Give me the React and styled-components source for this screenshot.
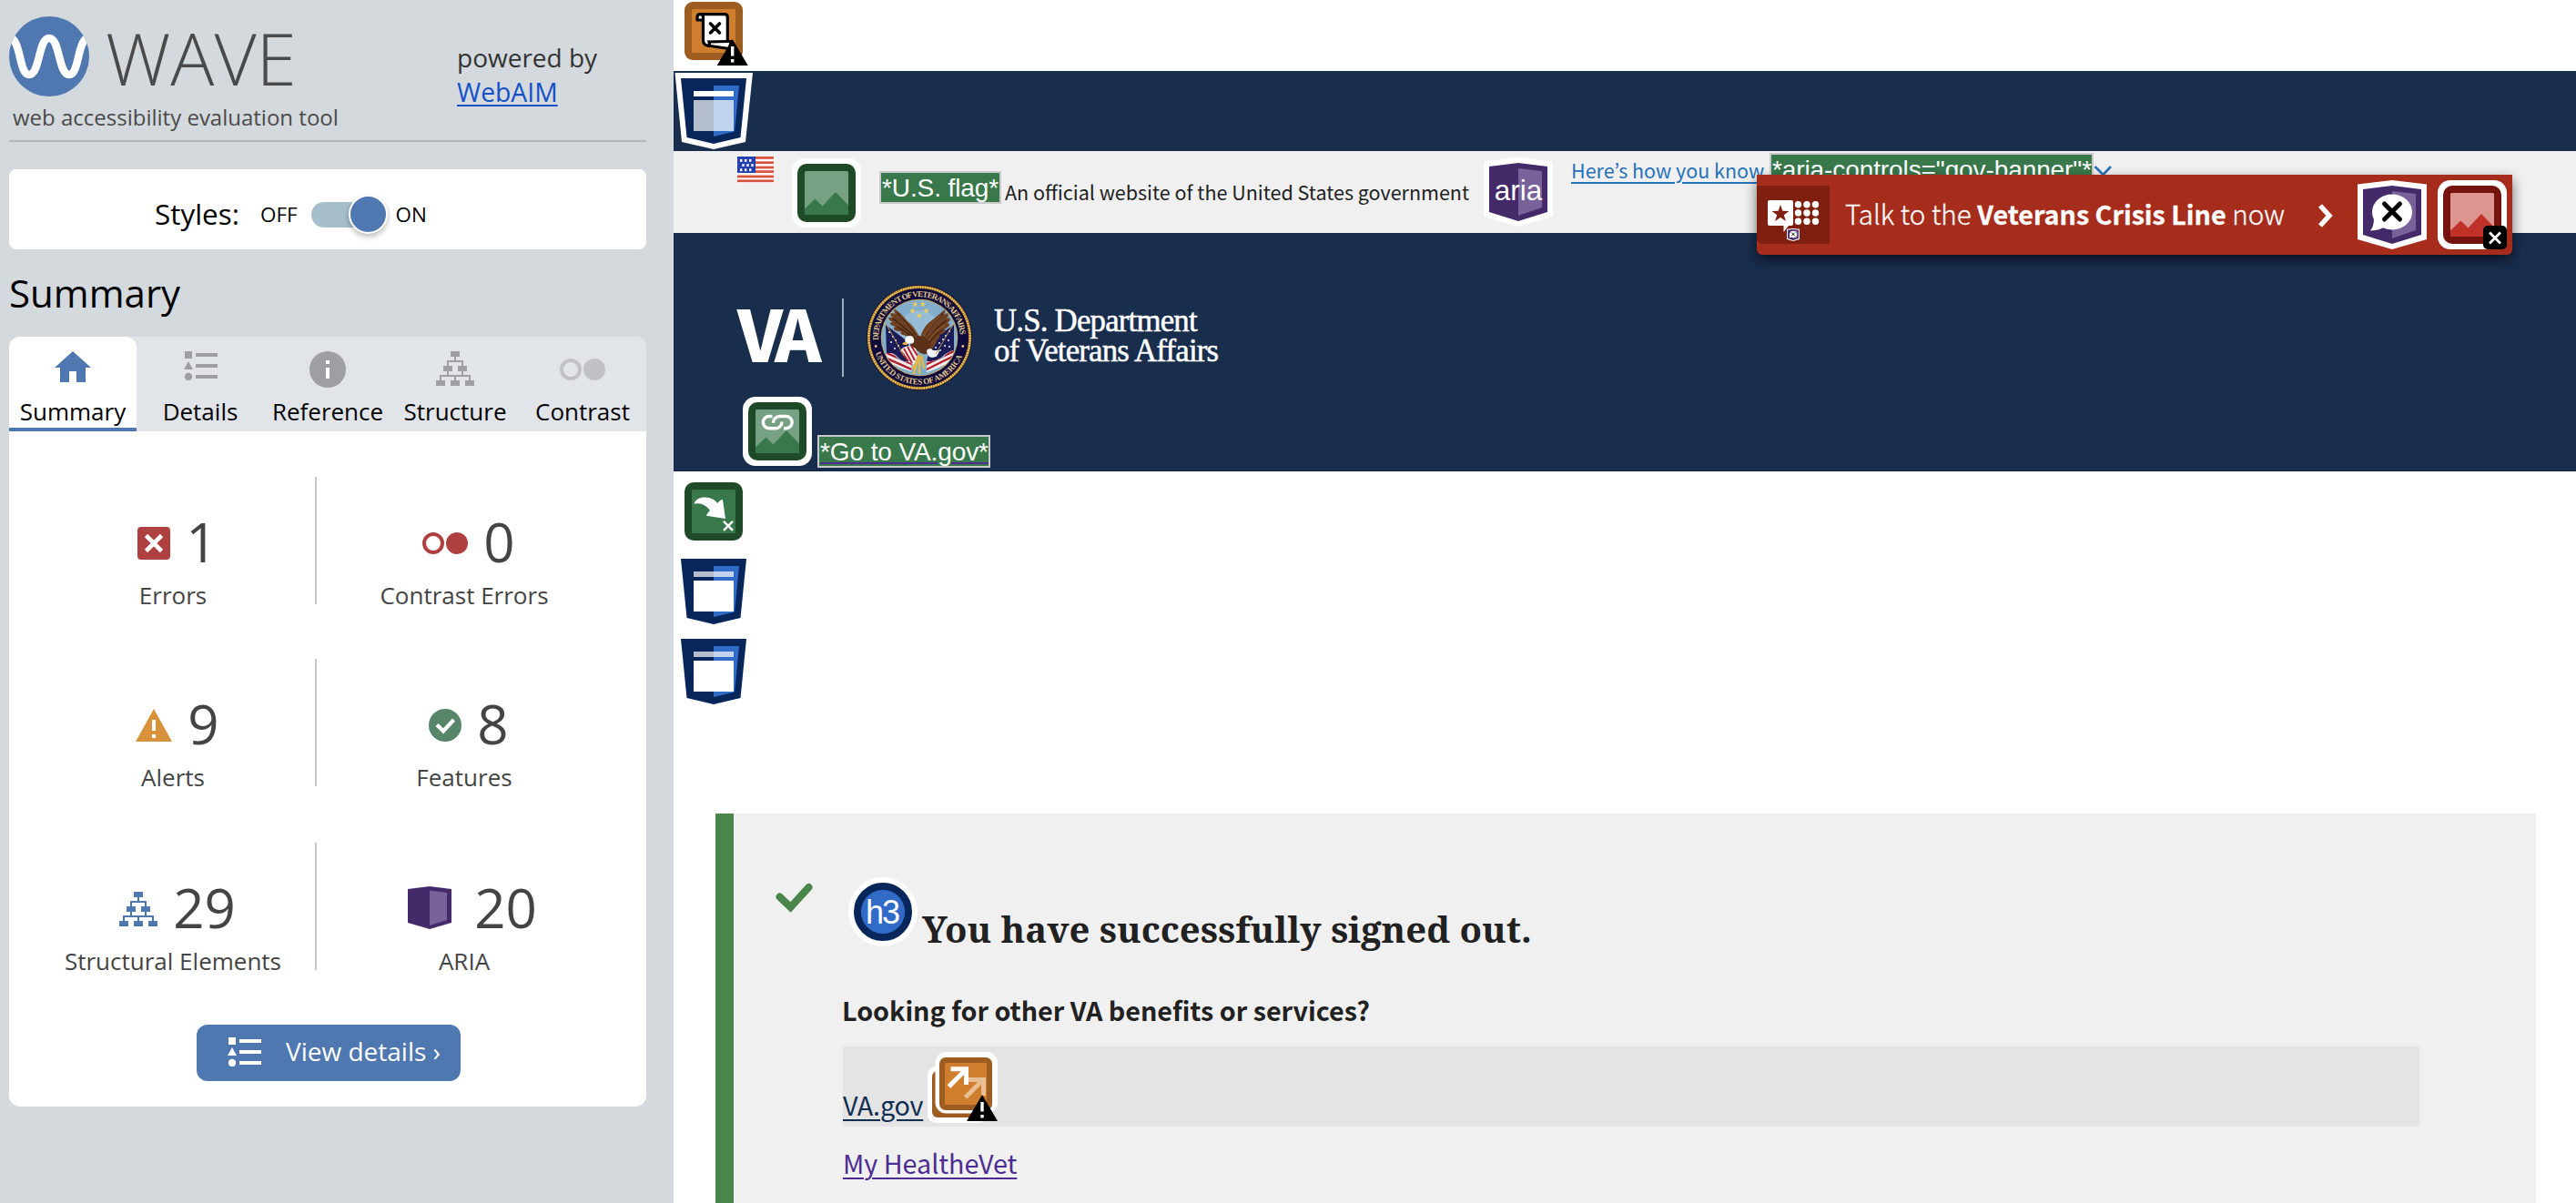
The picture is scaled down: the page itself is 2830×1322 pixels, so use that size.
import React from "react";
import styled, { createGlobalStyle, css } from "styled-components";

const openSans = `"Open Sans", "Liberation Sans", sans-serif`;
const sourceSans = `"Noto Sans CJK KR", "Noto Sans", sans-serif`;
const helvetica = `"Liberation Sans", Arial, sans-serif`;

const GlobalStyle = createGlobalStyle`
  * { box-sizing: border-box; }
  html, body { margin: 0; padding: 0; background: #fff; }
  svg { display: block; flex: none; }
`;

const Screen = styled.div`
  display: flex;
  width: 2830px;
  height: 1322px;
  overflow: hidden;
`;

/* ---------- Sidebar ---------- */

const Sidebar = styled.aside`
  flex: none;
  width: 740px;
  height: 100%;
  padding: 18px 30px 0 10px;
  background: #d4d9dd;
  font-family: ${openSans};
`;

const SidebarHeader = styled.header`
  display: flex;
  height: 138px;
  border-bottom: 2px solid #b2b8bc;
`;

const Brand = styled.div`
  width: 492px;
`;

const BrandRow = styled.div`
  display: flex;
  gap: 18px;
  height: 88px;
`;

const BrandName = styled.div`
  padding-top: 1px;
  font-size: 80px;
  font-weight: 300;
  line-height: 88px;
  color: #4a4a4a;
`;

const Tagline = styled.div`
  margin: 7px 0 0 4px;
  font-size: 24px;
  line-height: 32px;
  color: #4a4a4a;
`;

const PoweredBy = styled.div`
  display: flex;
  flex-direction: column;
  align-items: flex-start;
  padding-top: 26px;
  font-size: 28px;
  line-height: 38px;
  color: #333;
`;

const WebAimLink = styled.a`
  color: #1351c9;
  font-size: 28.3px;
  text-decoration: underline;
  text-decoration-thickness: 2px;
  text-underline-offset: 3px;
`;

const StylesCard = styled.section`
  display: flex;
  align-items: center;
  height: 88px;
  margin-top: 30px;
  padding: 11px 0 0 160px;
  background: #fff;
  border-radius: 8px;
`;

const StylesLabel = styled.span`
  width: 116px;
  padding-bottom: 3px;
  font-size: 31.4px;
`;

const ToggleText = styled.span`
  font-size: 22.4px;
`;

const ToggleTrack = styled.span`
  display: flex;
  align-items: center;
  justify-content: flex-end;
  width: 82px;
  height: 28px;
  margin: 0 11px 0 15px;
  background: linear-gradient(to right, #a6bfca 70px, transparent 70px);
  border-radius: 14px;
`;

const ToggleThumb = styled.span`
  flex: none;
  width: 43px;
  height: 43px;
  margin-right: -2px;
  background: #5078b0;
  border: 2px solid #fff;
  border-radius: 50%;
  box-shadow: 0 3px 6px rgba(0, 0, 0, 0.28);
`;

const SidebarTitle = styled.h1`
  margin: 19px 0 19px;
  font-size: 42px;
  font-weight: 400;
  line-height: 58px;
  color: #000;
`;

const Panel = styled.section`
  height: 846px;
  background: #fff;
  border-radius: 12px;
  overflow: hidden;
`;

const Tabs = styled.nav`
  display: grid;
  grid-template-columns: repeat(5, 140px);
  height: 104px;
  background: #e1e4e9;
`;

const Tab = styled.div`
  display: flex;
  flex-direction: column;
  align-items: center;
  padding-top: 16px;
  font-size: 26px;
  line-height: 36px;
  color: #000;
  ${(p) =>
    p.$active &&
    css`
      background: linear-gradient(#5078b0, #5078b0) bottom / 100% 4px no-repeat, #fff;
      border-radius: 12px 12px 0 0;
    `}
`;

const TabIcon = styled.div`
  display: flex;
  justify-content: center;
  height: 40px;
  margin-bottom: 8px;
  padding-top: ${(p) => p.$drop || 0}px;
`;

const Stats = styled.div`
  display: grid;
  grid-template-columns: 314px 324px;
  grid-template-rows: 140px 140px 142px;
  row-gap: 60px;
  align-items: end;
  padding: 50px 0 0 24px;
`;

const Stat = styled.div`
  display: flex;
  flex-direction: column;
  align-items: center;
  height: 140px;
  padding-top: 29px;
  ${(p) => p.$divided && css`border-right: 2px solid #c8c8c8;`}
`;

const StatValue = styled.div`
  display: flex;
  align-items: center;
  gap: 17px;
  height: 84px;
  padding-left: 10px;
  font-size: 60px;
  line-height: 84px;
  color: #444;
`;

const StatIcon = styled.span`
  padding-top: ${(p) => (p.$wide ? 0 : 3)}px;
  margin: 0 ${(p) => (p.$wide ? 8 : 0)}px;
`;

const StatLabel = styled.div`
  font-size: 26px;
  line-height: 34px;
  white-space: nowrap;
  color: #444;
`;

const DetailsButton = styled.button`
  display: flex;
  align-items: center;
  gap: 27px;
  width: 290px;
  height: 62px;
  margin: 60px 0 0 206px;
  padding: 0 0 2px 34px;
  border: 0;
  border-radius: 12px;
  background: #5078b0;
  color: #fff;
  font-family: inherit;
  font-size: 28px;
  line-height: 38px;
`;

const DetailsText = styled.span`
  padding-bottom: 2px;
  white-space: nowrap;
`;

/* ---------- Evaluated page ---------- */

const Page = styled.main`
  position: relative;
  flex: 1;
  height: 100%;
  background: #fff;
  font-family: ${sourceSans};
  color: #212121;
`;

const AlertStrip = styled.div`
  height: 78px;
  padding: 2px 0 0 12px;
`;

const NavStrip = styled.div`
  height: 88px;
  padding: 2px 0 0 1px;
  background: #192d4d;
`;

const GovBanner = styled.div`
  display: flex;
  align-items: flex-start;
  height: 90px;
  padding-left: 70px;
  background: #f0f0f0;
`;

const FlagBox = styled.span`
  margin-top: 5px;
`;

const ImageMarker = styled.span`
  margin: 8px 20px 0;
`;

const AltText = styled.span`
  display: inline-block;
  width: ${(p) => p.$width}px;
  height: 36px;
  margin: ${(p) => p.$margin || "0"};
  padding-left: 1px;
  border: 2px solid #c9cbca;
  background: #38784b;
  color: #fff;
  font-family: ${helvetica};
  font-size: 28px;
  line-height: 33px;
  letter-spacing: -0.1px;
  white-space: nowrap;
  text-decoration: ${(p) => (p.$linked ? "underline 2px #4c2c92" : "none")};
  text-underline-offset: 2px;
`;

const OfficialText = styled.span`
  width: 526px;
  margin: 25px 0 0 4px;
  font-size: 21.5px;
  line-height: 40px;
  white-space: nowrap;
`;

const AriaMarker = styled.span`
  margin-top: 7px;
`;

const HowLink = styled.a`
  width: 218px;
  margin: 6px 0 0 20px;
  font-size: 21.5px;
  line-height: 30px;
  white-space: nowrap;
  color: #2672b9;
  text-decoration: underline;
  text-decoration-thickness: 2px;
  text-underline-offset: 4px;
`;

const ChevronBox = styled.span`
  margin-top: 15px;
`;

const CrisisLine = styled.aside`
  position: absolute;
  left: 1190px;
  top: 192px;
  display: flex;
  align-items: flex-start;
  width: 830px;
  height: 88px;
  background: #a62c1b;
  border-radius: 0 0 6px 6px;
  box-shadow: 0 6px 14px rgba(0, 0, 0, 0.55);
`;

const CrisisBadge = styled.div`
  width: 80px;
  height: 64px;
  margin-top: 12px;
  background: #7f1f10;
  border-radius: 0 0 0 6px;
`;

const CrisisText = styled.div`
  width: 519px;
  margin: 23px 0 0 17px;
  font-size: 29.6px;
  font-weight: 300;
  line-height: 40px;
  white-space: nowrap;
  color: #fff;
  -webkit-text-stroke: 0.3px #fff;
`;

const CrisisName = styled.b`
  font-size: 28.7px;
  font-weight: 700;
`;

const CrisisChevron = styled.span`
  width: 44px;
  margin-top: 31px;
`;

const CrisisMarkers = styled.div`
  display: flex;
  gap: 12px;
  margin-top: 6px;
`;

const SiteHeader = styled.header`
  height: 262px;
  padding: 56px 0 0 70px;
  background: #192d4d;
  border-bottom: 1px solid #112445;
`;

const LogoRow = styled.div`
  display: flex;
  align-items: center;
  height: 118px;
`;

const LogoLetters = styled.span`
  width: 115px;
  margin-top: -14px;
  font-size: 78px;
  font-weight: 900;
  line-height: 100px;
  letter-spacing: -7.5px;
  color: #fff;
`;

const LogoRule = styled.span`
  width: 2px;
  height: 86px;
  margin-right: 25px;
  background: #a1abb9;
`;

const DepartmentName = styled.div`
  margin: -3px 0 0 24px;
  font-family: "Liberation Serif", "Times New Roman", serif;
  font-size: 34.8px;
  line-height: 32.5px;
  letter-spacing: -0.8px;
  white-space: nowrap;
  color: #fff;
  -webkit-text-stroke: 0.5px #fff;
`;

const HomeLinkRow = styled.div`
  display: flex;
  align-items: flex-start;
  gap: 6px;
  padding: 6px 0 0 6px;
`;

const MarkerColumn = styled.div`
  display: flex;
  flex-direction: column;
  height: 376px;
  padding: 12px 0 0 1px;
`;

const SkipMarker = styled.span`
  margin: 0 0 14px 11px;
`;

const NavMarker = styled.span`
  height: 88px;
`;

const SignedOutAlert = styled.section`
  display: flex;
  width: 2000px;
  height: 428px;
  margin-left: 46px;
  background: #f0f0f0;
  border-left: 20px solid #4a8649;
`;

const CheckColumn = styled.div`
  width: 120px;
  padding: 76px 0 0 46px;
`;

const AlertBody = styled.div`
  width: 1732px;
  padding-top: 70px;
`;

const HeadingRow = styled.div`
  display: flex;
  align-items: flex-start;
  height: 110px;
  padding-left: 6px;
`;

const HeadingBadge = styled.span`
  display: flex;
  align-items: center;
  justify-content: center;
  width: 76px;
  height: 76px;
  margin-right: 5px;
  padding: 2px 2px 0 0;
  border: 6px solid #fff;
  border-radius: 50%;
  background: radial-gradient(circle, #306bc8 23.5px, #08265a 24.5px);
  color: #fff;
  font-family: ${helvetica};
  font-size: 36px;
  line-height: 40px;
  letter-spacing: -2px;
`;

const AlertHeading = styled.h3`
  margin: 31px 0 0;
  font-family: "Noto Serif", "DejaVu Serif", serif;
  font-size: 40px;
  font-weight: 700;
  line-height: 52px;
`;

const Question = styled.p`
  margin: 0 0 0 -1px;
  padding-top: 16px;
  height: 76px;
  font-size: 28.7px;
  font-weight: 700;
  line-height: 40px;
`;

const HighlightedRow = styled.div`
  display: flex;
  align-items: flex-start;
  height: 88px;
  background: #e4e4e4;
`;

const ServiceLink = styled.a`
  font-size: 28.7px;
  line-height: 40px;
  letter-spacing: ${(p) => p.$tracking || 0}px;
  color: ${(p) => p.$color};
  text-decoration: underline;
  text-decoration-thickness: 2px;
  text-underline-offset: 4px;
`;

const PrimaryLinkBox = styled.span`
  width: 93px;
  padding-top: 44px;
`;

const StackMarker = styled.span`
  padding-top: 6px;
`;

const SecondRow = styled.div`
  padding-top: 20px;
`;

/* ---------- Drawings ---------- */

const WaveLogo = () => (
  <svg width="88" height="88" viewBox="0 0 88 88">
    <defs>
      <clipPath id="wave-clip"><circle cx="44" cy="44" r="44" /></clipPath>
    </defs>
    <circle cx="44" cy="44" r="44" fill="#5078b0" />
    <path clipPath="url(#wave-clip)" d="M-2 22C14 22 10 64 22 64S32 24 44 24 54 64 66 64 74 22 90 22" fill="none" stroke="#fff" strokeWidth="8.5" />
  </svg>
);

const HomeIcon = () => (
  <svg width="40" height="34" viewBox="0 0 40 34">
    <path d="M20 0 40 18H34V34H24V22H16V34H6V18H0Z" fill="#5078b0" />
  </svg>
);

const ListIcon = ({ color }) => (
  <svg width="37" height="32" viewBox="0 0 37 32" fill={color}>
    <path d="M1 0H9V8H1ZM13 2H37V6H13ZM13 14H37V18H13ZM13 26H37V30H13ZM5 11 10 20H0Z" />
    <circle cx="5" cy="28" r="4.2" />
  </svg>
);

const InfoIcon = () => (
  <svg width="40" height="40" viewBox="0 0 40 40">
    <circle cx="20" cy="20" r="20" fill="#9d9fa2" />
    <path d="M18 10H22V14H18ZM18 18H22V30H18Z" fill="#fff" />
  </svg>
);

const TreeIcon = ({ color }) => (
  <svg width="42" height="38" viewBox="0 0 42 38">
    <path d="M16 0H26V6H16ZM8 16H18V22H8ZM24 16H34V22H24ZM0 32H10V38H0ZM16 32H26V38H16ZM32 32H42V38H32Z" fill={color} />
    <path d="M21 6V11M13 16V11H29V16M13 22V27M29 22V27M5 32V27H37V32M21 27V32" fill="none" stroke={color} strokeWidth="2" />
  </svg>
);

const ContrastIcon = ({ color }) => (
  <svg width="50" height="24" viewBox="0 0 50 24">
    <circle cx="12" cy="12" r="10" fill="none" stroke={color} strokeWidth="4" />
    <circle cx="38" cy="12" r="12" fill={color} />
  </svg>
);

const ErrorIcon = () => (
  <svg width="36" height="36" viewBox="0 0 36 36">
    <rect width="36" height="36" rx="4" fill="#ae413f" />
    <path d="M9.5 9.5 26.5 26.5M26.5 9.5 9.5 26.5" stroke="#fff" strokeWidth="4.6" />
  </svg>
);

const WarningIcon = () => (
  <svg width="40" height="36" viewBox="0 0 40 36">
    <path d="M20 0 40 36H0Z" fill="#d8923b" />
    <path d="M18 12H22V24H18ZM18 28H22V32H18Z" fill="#fff" />
  </svg>
);

const FeatureIcon = () => (
  <svg width="36" height="36" viewBox="0 0 36 36">
    <circle cx="18" cy="18" r="18" fill="#568569" />
    <path d="M9 17.5 16 24.5 27.5 12" fill="none" stroke="#fff" strokeWidth="4.2" />
  </svg>
);

const AriaIcon = () => (
  <svg width="48" height="47" viewBox="0 0 48 47">
    <path d="M24 0 48 3V40L24 47 0 40V3Z" fill="#442a69" />
    <path d="M24 4.5 43 7V37L24 43Z" fill="#796299" />
  </svg>
);

const AriaShield = ({ children }) => (
  <svg width="76" height="76" viewBox="0 0 76 76">
    <path d="M0 4.5 38 0 76 4.5V65L38 76 0 65Z" fill="#fff" />
    <path d="M6 10 38 6 70 10V60L38 70 6 60Z" fill="#442a69" />
    <path d="M38 12 64 15V55L38 64Z" fill="#796299" />
    {children}
  </svg>
);

const AriaTextIcon = () => (
  <AriaShield>
    <text x="38" y="46.5" textAnchor="middle" fill="#fff" fontFamily="Liberation Sans, Arial, sans-serif" fontSize="31.5">aria</text>
  </AriaShield>
);

const AriaHiddenShape = () => (
  <>
    <ellipse cx="38" cy="35" rx="22" ry="19.5" fill="#fff" />
    <path d="M18 42Q18 51 14 55.5 26 55 31 50Z" fill="#fff" />
    <path d="M29.5 26 46.5 43M46.5 26 29.5 43" stroke="#000" strokeWidth="5" strokeLinecap="round" />
  </>
);

const AlertTriangle = ({ x, y }) => (
  <g transform={`translate(${x} ${y})`}>
    <path d="M17 0 34 29H0Z" fill="#000" />
    <path d="M15.3 8H18.7V18.5H15.3ZM15.3 22H18.7V25.5H15.3Z" fill="#fff" />
  </g>
);

const ScriptIcon = () => (
  <svg width="70" height="72" viewBox="0 0 70 72">
    <rect width="64" height="64" rx="9" fill="#9d5d20" />
    <rect x="8" y="8" width="48" height="48" rx="1.5" fill="#cf7e2d" />
    <path d="M17 13.7H44Q47.3 13.7 47.3 17V43.5H51.5L49 51.5 25 48Q20.5 47 20.5 42V20H14V17Q14 13.7 17 13.7Z" fill="#fff" stroke="#000" strokeWidth="3.2" strokeLinejoin="round" />
    <path d="M20.5 20V17Q20.5 14 17.5 14M25 48Q28.5 48 27 44L47 43.5" fill="none" stroke="#000" strokeWidth="3.2" />
    <path d="M28.5 24 38.5 34M38.5 24 28.5 34" stroke="#000" strokeWidth="3.6" strokeLinecap="round" />
    <AlertTriangle x={35.7} y={41} />
  </svg>
);

const NavIcon = ({ outlined, header }) => (
  <svg width="88" height="84" viewBox="0 0 88 84">
    {outlined && <path d="M.5 0H86L78 76 43 84 8 76Z" fill="#fff" />}
    <path d="M7 6H79L72.5 71 43 78 13.5 71Z" fill="#08265a" />
    <path d="M43 14H71L66 64.5 43 70Z" fill="#306bc8" />
    <path d="M21 20H65V26H21Z" fill="#fff" opacity={header ? 1 : 0.7} />
    <path d="M21 30H65V64H21Z" fill="#fff" opacity={header ? 0.7 : 1} />
  </svg>
);

const PictureIcon = ({ dark = "#1f4a28", base = "#38784b", light = "#76a183", children }) => (
  <svg width="76" height="76" viewBox="0 0 76 76">
    <rect width="76" height="76" rx="14" fill="#fff" />
    <rect x="6" y="6" width="64" height="64" rx="10" fill={dark} />
    <rect x="14" y="14" width="48" height="48" rx="1.5" fill={light} />
    <path d="M14 55.5 25.5 44.5 33.5 52.5 48 37 62 51.5V60.5Q62 62 60.5 62H15.5Q14 62 14 60.5Z" fill={base} />
    {children}
  </svg>
);

const LinkShape = () => (
  <g fill="none" stroke="#fff" strokeWidth="3.4">
    <path d="M32.5 21.5H29A6.7 6.6 0 0 0 29 34.7H36A7 7 0 0 0 43 27.5" />
    <path d="M45 34.7H47.5A6.7 6.6 0 0 0 47.5 21.5H40.5A7 7 0 0 0 33.5 28.7" />
  </g>
);

const NullBadge = () => (
  <g>
    <rect x="50" y="50" width="26" height="26" rx="5" fill="#000" />
    <path d="M57 57.5 69 69.5M69 57.5 57 69.5" stroke="#fff" strokeWidth="2.8" />
  </g>
);

const SkipIcon = () => (
  <svg width="64" height="64" viewBox="0 0 64 64">
    <rect width="64" height="64" rx="10" fill="#1f4a28" />
    <rect x="8" y="8" width="48" height="48" rx="1.5" fill="#38784b" />
    <path d="M10.5 23.5Q12 18 20 16.5 31 15.5 36.3 23 39.5 18.7 42 18.9L45 40 24 36.8Q23.5 36 28 31 21 21.5 11.5 23.6Z" fill="#fff" />
    <path d="M43 42.8 53 52.8M53 42.8 43 52.8" stroke="#fff" strokeWidth="2.4" />
  </svg>
);

const FlagIcon = () => (
  <svg width="40" height="30" viewBox="0 0 40 30">
    <rect width="40" height="30" fill="#fff" />
    {[1, 6.3, 11.6, 16.2, 21.6, 26.4].map((y) => (
      <rect key={y} y={y} width="40" height="2.8" fill="#d8543f" />
    ))}
    <rect y="1" width="20" height="18" fill="#2440b3" />
    {[3, 8, 13].map((x) => <rect key={x} x={x} y="4" width="2.4" height="2.8" fill="#fff" />)}
    {[5.3, 10.3, 15.3].map((x) => <rect key={x} x={x} y="9.2" width="2.4" height="2.8" fill="#fff" />)}
    {[3, 8, 13].map((x) => <rect key={x} x={x} y="14.3" width="2.4" height="2.8" fill="#fff" />)}
  </svg>
);

const starPath = (cx, cy, r) => {
  const pts = [];
  for (let i = 0; i < 10; i += 1) {
    const a = (Math.PI / 5) * i - Math.PI / 2;
    const d = i % 2 ? r * 0.4 : r;
    pts.push(`${(cx + d * Math.cos(a)).toFixed(2)} ${(cy + d * Math.sin(a)).toFixed(2)}`);
  }
  return `M${pts.join("L")}Z`;
};

const CrisisIcon = () => (
  <svg width="80" height="64" viewBox="0 0 80 64">
    <path d="M14 16H38Q40 16 40 18V42Q40 44 38 44H35L29.5 51V44H14Q12 44 12 42V18Q12 16 14 16Z" fill="#fff" />
    <path d={starPath(26, 31, 10)} fill="#7f1f10" />
    {[45.5, 55, 64.5].map((x) =>
      [20.7, 30, 39.3].map((y) => <circle key={`${x}-${y}`} cx={x} cy={y} r="3.7" fill="#fff" />)
    )}
    <g transform="translate(33 47) scale(.184)">
      <AriaShield><AriaHiddenShape /></AriaShield>
    </g>
  </svg>
);

const StackIcon = () => (
  <svg width="78" height="78" viewBox="0 0 78 78">
    <rect y="16" width="66" height="62" rx="9" fill="#fff" />
    <rect x="5" y="21" width="58" height="51" rx="6" fill="#9d5d20" />
    <rect x="8.5" width="68.5" height="67.5" rx="12" fill="#fff" />
    <rect x="13" y="6" width="58" height="58" rx="7" fill="#9d5d20" />
    <rect x="19" y="12" width="46" height="46" rx="1.5" fill="#cf7e2d" />
    <g fill="none" strokeWidth="5">
      <path d="M41.5 50 60.5 31M44 30.5H61.5V48" stroke="#e8bf95" />
      <path d="M23.5 38 42 19.5M25.5 18.7H42.5V36" stroke="#fff" />
    </g>
    <AlertTriangle x={43} y={47} />
  </svg>
);

const Seal = () => (
  <svg width="116" height="116" viewBox="0 0 116 116">
    <defs>
      <path id="seal-top" d="M13.1 61A45 45 0 1 1 102.9 61" />
      <path id="seal-bottom" d="M9.5 75A51.4 51.4 0 0 0 106.5 75" />
      <clipPath id="seal-clip"><circle cx="58" cy="58" r="41.5" /></clipPath>
      <clipPath id="flag-l"><path d="M21 76Q29 73 33 80 40 86 50 85L49 95Q38 92 33 89 26 88 21 76Z" /></clipPath>
      <clipPath id="flag-r"><path d="M96 72Q89 73 85 79 76 85 66 84L66 96Q78 92 83 89 92 88 96 72Z" /></clipPath>
    </defs>
    <circle cx="58" cy="58" r="58" fill="#0f0b3c" />
    <circle cx="58" cy="58" r="55.6" fill="none" stroke="#8a5f1c" strokeWidth="3.2" />
    <circle cx="58" cy="58" r="55.6" fill="none" stroke="#f0c65a" strokeWidth="2.4" strokeDasharray="1.9 .8" />
    <circle cx="58" cy="58" r="42.3" fill="#cfa94d" />
    <circle cx="58" cy="58" r="41.5" fill="#82aecb" />
    <g fill="#e0c88a" fontFamily="Liberation Serif, Times New Roman, serif" fontSize="9" fontWeight="700">
      <text textLength="141" lengthAdjust="spacing"><textPath href="#seal-top">DEPARTMENT OF VETERANS AFFAIRS</textPath></text>
      <text textLength="123" lengthAdjust="spacing"><textPath href="#seal-bottom">UNITED STATES OF AMERICA</textPath></text>
      <circle cx="10.2" cy="67.5" r="1.4" />
      <circle cx="105.8" cy="67.5" r="1.4" />
    </g>
    <g clipPath="url(#seal-clip)">
      <circle cx="58" cy="50" r="22" fill="#a9cbe0" opacity=".5" />
      <path d="M21 44 45 62 51 84Q41 86 35 80 29 73 22 76Z" fill="#1b1b57" />
      <path d="M96 44 72 60 66 84Q76 85 83 79 88 73 96 74Z" fill="#1b1b57" />
      <g fill="#dfe4f2">
        {[[25, 52], [29, 57], [27, 63], [32, 61], [35, 67], [31, 70], [38, 73], [91, 51], [87, 56], [90, 61], [84, 60], [86, 67], [80, 64], [81, 72], [76, 69], [91, 68], [76, 78]].map(([x, y]) => (
          <circle key={`${x}-${y}`} cx={x} cy={y} r="1.1" />
        ))}
      </g>
      <g clipPath="url(#flag-l)">
        <rect x="18" y="70" width="36" height="28" fill="#f3eeee" />
        <path d="M18 79 52 94M20 74 54 89M18 85 46 98M28 74 54 84" stroke="#b3202e" strokeWidth="2.4" />
      </g>
      <g clipPath="url(#flag-r)">
        <rect x="62" y="68" width="38" height="30" fill="#f3eeee" />
        <path d="M98 77 64 94M98 72 62 89M98 83 70 98M90 71 62 84" stroke="#b3202e" strokeWidth="2.4" />
      </g>
      <path d="M58 57Q52 45 45 40 38 31 30 26 30 30 32 32 27 30 26 32 27 35 29 36 24 35 24 37 26 40 29 41 25 41 26 43 29 46 32 46 29 47 30 49 34 52 38 51 36 54 40 55 44 57 47 56 51 62 60 64Z" fill="#6f4021" />
      <path d="M58 62Q61 48 68 42 77 35 86 27 87 30 85 33 89 30 90 32 90 35 88 37 92 35 92 38 91 41 88 42 92 42 91 45 88 48 85 49 88 50 86 52 83 55 80 55 82 57 78 60 75 68 68 76L62 74Z" fill="#6f4021" />
      <path d="M34 31Q46 42 54 55M29 37Q42 47 52 56M33 46Q42 50 50 57M84 32Q72 42 65 55M88 39Q76 47 68 60M85 49Q76 53 69 64" fill="none" stroke="#3f2110" strokeWidth="1.3" />
      <path d="M37 33Q47 42 55 53M82 33Q71 43 63 56M86 44Q75 50 68 61" fill="none" stroke="#a06a3a" strokeWidth=".9" />
      <path d="M48 60Q56 53 65 58 73 66 70 74 62 79 57 73 50 70 48 66Z" fill="#5b3219" />
      <path d="M42 61Q43 56 49 56 53 58 52 63 50 66 47 64 44 66 40 65 44 63 42 61Z" fill="#fff" />
      <path d="M39 65Q41 62 44 63L45 66 41 66Z" fill="#e0b13c" />
      <path d="M38 71Q45 64 54 70 58 77 52 88 42 84 38 71Z" fill="#f5f0ee" />
      <path d="M41 70 50 86M45 68 53 83M49 67 56 78M38 73 46 84" stroke="#b3202e" strokeWidth="1.9" />
      <path d="M66 72Q70 68 73 72L80 72Q79 79 72 80 66 79 66 72Z" fill="#eef1f5" />
      <path d="M57 78 52 97M58 80 58 97M60 78 63 91M56 84 51 91" stroke="#e6b93f" strokeWidth="2.4" strokeLinecap="round" />
      <path d="M21 42 41 78M96 42 76 76" stroke="#caa14a" strokeWidth=".9" />
      {[[53.3, 21.3], [61.7, 21.3], [50.5, 28.7], [65.5, 28.7], [58, 34]].map(([x, y]) => (
        <path key={`${x}-${y}`} d={starPath(x, y, 3.5)} fill="#efcf5e" />
      ))}
    </g>
  </svg>
);

const TABS = [
  { label: "Summary", icon: <HomeIcon />, active: true },
  { label: "Details", icon: <ListIcon color="#9d9fa2" /> },
  { label: "Reference", icon: <InfoIcon /> },
  { label: "Structure", icon: <TreeIcon color="#9d9fa2" /> },
  { label: "Contrast", icon: <ContrastIcon color="#c0c2c5" />, drop: 8 },
];

const STATS = [
  { label: "Errors", value: "1", icon: <ErrorIcon /> },
  { label: "Contrast Errors", value: "0", icon: <ContrastIcon color="#ae413f" /> },
  { label: "Alerts", value: "9", icon: <WarningIcon /> },
  { label: "Features", value: "8", icon: <FeatureIcon /> },
  { label: "Structural Elements", value: "29", icon: <TreeIcon color="#5078b0" /> },
  { label: "ARIA", value: "20", icon: <AriaIcon />, wide: true },
];

export default function App() {
  return (
    <Screen>
      <GlobalStyle />
      <Sidebar>
        <SidebarHeader>
          <Brand>
            <BrandRow>
              <WaveLogo />
              <BrandName>WAVE</BrandName>
            </BrandRow>
            <Tagline>web accessibility evaluation tool</Tagline>
          </Brand>
          <PoweredBy>
            <span>powered by</span>
            <WebAimLink>WebAIM</WebAimLink>
          </PoweredBy>
        </SidebarHeader>

        <StylesCard>
          <StylesLabel>Styles:</StylesLabel>
          <ToggleText>OFF</ToggleText>
          <ToggleTrack><ToggleThumb /></ToggleTrack>
          <ToggleText>ON</ToggleText>
        </StylesCard>

        <SidebarTitle>Summary</SidebarTitle>

        <Panel>
          <Tabs>
            {TABS.map((t) => (
              <Tab key={t.label} $active={t.active}>
                <TabIcon $drop={t.drop}>{t.icon}</TabIcon>
                {t.label}
              </Tab>
            ))}
          </Tabs>
          <Stats>
            {STATS.map((s, i) => (
              <Stat key={s.label} $divided={i % 2 === 0}>
                <StatValue>
                  <StatIcon $wide={s.wide}>{s.icon}</StatIcon>
                  {s.value}
                </StatValue>
                <StatLabel>{s.label}</StatLabel>
              </Stat>
            ))}
          </Stats>
          <DetailsButton>
            <ListIcon color="#fff" />
            <DetailsText>View details ›</DetailsText>
          </DetailsButton>
        </Panel>
      </Sidebar>

      <Page>
        <AlertStrip><ScriptIcon /></AlertStrip>
        <NavStrip><NavIcon outlined header /></NavStrip>
        <GovBanner>
          <FlagBox><FlagIcon /></FlagBox>
          <ImageMarker><PictureIcon /></ImageMarker>
          <AltText $width={134} $margin="22px 0 0">*U.S. flag*</AltText>
          <OfficialText>An official website of the United States government</OfficialText>
          <AriaMarker><AriaTextIcon /></AriaMarker>
          <HowLink>Here’s how you know</HowLink>
          <AltText $width={356} $margin="2px 0 0">*aria-controls="gov-banner"*</AltText>
          <ChevronBox>
            <svg width="20" height="14" viewBox="0 0 20 14">
              <path d="M1.5 2 10.5 11 19 2" fill="none" stroke="#2672b9" strokeWidth="2.6" />
            </svg>
          </ChevronBox>
        </GovBanner>

        <SiteHeader>
          <LogoRow>
            <LogoLetters>VA</LogoLetters>
            <LogoRule />
            <Seal />
            <DepartmentName>
              U.S. Department
              <br />
              of Veterans Affairs
            </DepartmentName>
          </LogoRow>
          <HomeLinkRow>
            <PictureIcon><LinkShape /></PictureIcon>
            <AltText $width={190} $margin="42px 0 0" $linked>*Go to VA.gov*</AltText>
          </HomeLinkRow>
        </SiteHeader>

        <MarkerColumn>
          <SkipMarker><SkipIcon /></SkipMarker>
          <NavMarker><NavIcon /></NavMarker>
          <NavMarker><NavIcon /></NavMarker>
        </MarkerColumn>

        <SignedOutAlert>
          <CheckColumn>
            <svg width="44" height="34" viewBox="0 0 44 34">
              <path d="M4.5 15.5 16.5 27 36.5 5" fill="none" stroke="#4a8649" strokeWidth="8" strokeLinejoin="miter" strokeLinecap="round" />
            </svg>
          </CheckColumn>
          <AlertBody>
            <HeadingRow>
              <HeadingBadge>h3</HeadingBadge>
              <AlertHeading>You have successfully signed out.</AlertHeading>
            </HeadingRow>
            <Question>Looking for other VA benefits or services?</Question>
            <HighlightedRow>
              <PrimaryLinkBox>
                <ServiceLink $color="#112e51" $tracking={-0.2}>VA.gov</ServiceLink>
              </PrimaryLinkBox>
              <StackMarker><StackIcon /></StackMarker>
            </HighlightedRow>
            <SecondRow>
              <ServiceLink $color="#4c2c92">My HealtheVet</ServiceLink>
            </SecondRow>
          </AlertBody>
        </SignedOutAlert>

        <CrisisLine>
          <CrisisBadge><CrisisIcon /></CrisisBadge>
          <CrisisText>
            Talk to the <CrisisName>Veterans Crisis Line</CrisisName> now
          </CrisisText>
          <CrisisChevron>
            <svg width="18" height="28" viewBox="0 0 18 28">
              <path d="M3 3 13 14 3 25" fill="none" stroke="#fff" strokeWidth="5.4" />
            </svg>
          </CrisisChevron>
          <CrisisMarkers>
            <AriaShield><AriaHiddenShape /></AriaShield>
            <PictureIcon dark="#75130d" base="#c0312a" light="#dd9590"><NullBadge /></PictureIcon>
          </CrisisMarkers>
        </CrisisLine>
      </Page>
    </Screen>
  );
}
